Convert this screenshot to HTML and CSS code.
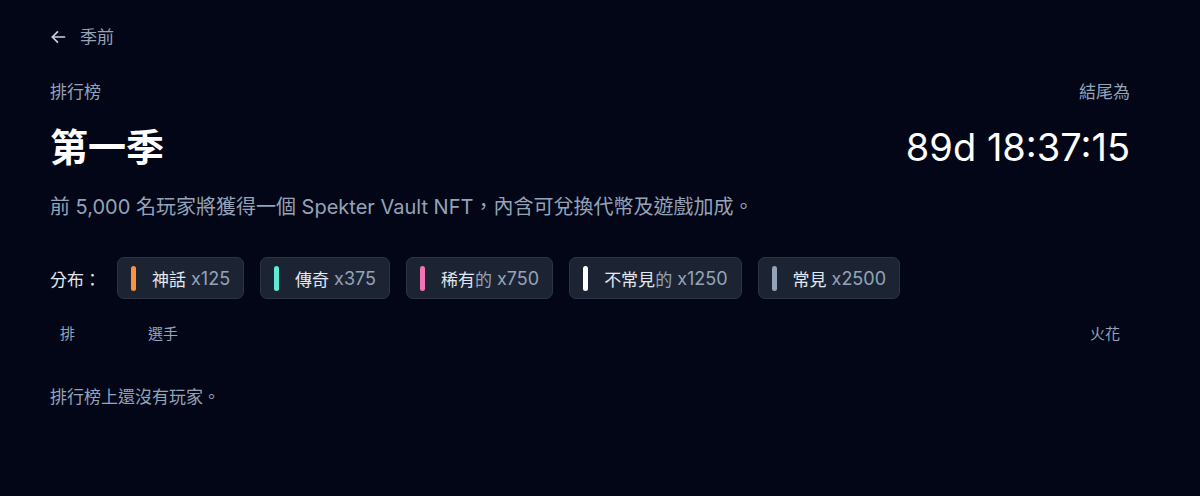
FILE: index.html
```html
<!DOCTYPE html>
<html lang="zh-Hant-TW">
<head>
    <meta charset="UTF-8">
    <meta name="viewport" content="width=device-width, initial-scale=1.0">
    <title>排行榜</title>
    <link rel="stylesheet" href="styles.css">
</head>
<body>
    <div class="page">
        <!-- 返回 -->
        <a class="back-link" href="#">
            <svg width="16" height="16" viewBox="0 0 16 16" fill="none" stroke="currentColor" stroke-width="1.7" stroke-linecap="round" stroke-linejoin="round">
                <path d="M14.5 8H2.5"/>
                <path d="M7.5 2.8L2.3 8l5.2 5.2"/>
            </svg>
            <span>季前</span>
        </a>

        <!-- 標題 -->
        <div class="season-head">
            <div class="season-left">
                <div class="label">排行榜</div>
                <h1 class="season-title">第一季</h1>
            </div>
            <div class="season-right">
                <div class="label">結尾為</div>
                <div class="countdown">89d 18:37:15</div>
            </div>
        </div>

        <p class="description">前 5,000 名玩家將獲得一個 Spekter Vault NFT，內含可兌換代幣及遊戲加成。</p>

        <!-- 分布 -->
        <div class="distribution">
            <span class="dist-label">分布：</span>
            <div class="chip"><span class="chip__bar bar-mythic"></span><span class="chip__name">神話</span><span class="chip__count">x125</span></div>
            <div class="chip"><span class="chip__bar bar-legend"></span><span class="chip__name">傳奇</span><span class="chip__count">x375</span></div>
            <div class="chip"><span class="chip__bar bar-rare"></span><span class="chip__name">稀有<span class="chip__muted">的</span></span><span class="chip__count">x750</span></div>
            <div class="chip"><span class="chip__bar bar-uncommon"></span><span class="chip__name">不常見<span class="chip__muted">的</span></span><span class="chip__count">x1250</span></div>
            <div class="chip"><span class="chip__bar bar-common"></span><span class="chip__name">常見</span><span class="chip__count">x2500</span></div>
        </div>

        <!-- 表格 -->
        <div class="table-head">
            <span class="col-rank">排</span>
            <span class="col-player">選手</span>
            <span class="col-spark">火花</span>
        </div>
        <div class="empty">排行榜上還沒有玩家。</div>
    </div>
</body>
</html>
```

FILE: styles.css
```css
* {
    margin: 0;
    padding: 0;
    box-sizing: border-box;
}

body {
    background: #030617;
    color: #f1f5f9;
    font-family: Inter, "Noto Sans CJK TC", sans-serif;
    height: 100vh;
    overflow: hidden;
}

.page {
    padding: 26px 70px 0 50px;
}

/* 返回 */
.back-link {
    display: flex;
    align-items: center;
    gap: 14px;
    color: #94a3b8;
    text-decoration: none;
    font-size: 17px;
    line-height: 22px;
}

.back-link svg {
    color: #cbd5e1;
}

/* 標題 */
.season-head {
    display: flex;
    justify-content: space-between;
    align-items: flex-end;
    margin-top: 32px;
}

.season-right {
    text-align: right;
}

.label {
    color: #94a3b8;
    font-size: 17px;
    line-height: 24px;
}

.season-title {
    font-size: 38px;
    font-weight: 700;
    line-height: 48px;
    margin-top: 19px;
    color: #ffffff;
}

.countdown {
    font-size: 38px;
    font-weight: 400;
    line-height: 48px;
    margin-top: 19px;
    color: #ffffff;
}

.description {
    color: #94a3b8;
    font-size: 20px;
    line-height: 30px;
    margin-top: 21px;
}

/* 分布 */
.distribution {
    display: flex;
    align-items: center;
    gap: 16px;
    margin-top: 35px;
}

.dist-label {
    color: #e2e8f0;
    font-size: 17px;
}

.chip {
    display: flex;
    align-items: center;
    height: 42px;
    padding: 0 13px;
    background: #1c2434;
    border: 1px solid #2c3546;
    border-radius: 7px;
    font-size: 17px;
}

.chip__bar {
    width: 5px;
    height: 25px;
    border-radius: 3px;
    margin-right: 16px;
}

.bar-mythic { background: #fb923c; }
.bar-legend { background: #5eead4; }
.bar-rare { background: #f472b6; }
.bar-uncommon { background: #ffffff; }
.bar-common { background: #94a3b8; }

.chip__name {
    color: #e2e8f0;
    margin-right: 5px;
}

.chip__muted,
.chip__count {
    color: #94a3b8;
}

.chip__count {
    font-size: 18px;
}

/* 表格 */
.table-head {
    display: flex;
    align-items: center;
    padding: 0 10px;
    margin-top: 24px;
    color: #94a3b8;
    font-size: 15px;
    line-height: 22px;
}

.col-rank {
    width: 88px;
}

.col-player {
    flex: 1;
}

.empty {
    margin-top: 39px;
    color: #94a3b8;
    font-size: 17px;
    line-height: 26px;
}
```
